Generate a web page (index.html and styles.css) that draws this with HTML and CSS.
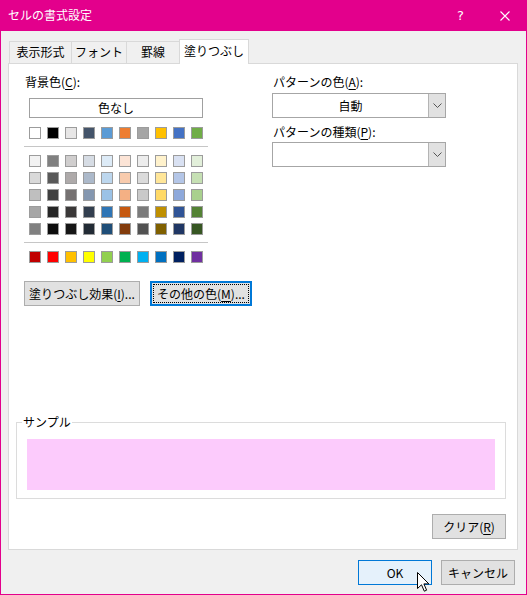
FILE: index.html
```html
<!DOCTYPE html>
<html lang="ja">
<head>
<meta charset="utf-8">
<title>セルの書式設定</title>
<link rel="stylesheet" href="styles.css">
</head>
<body>
<div class="window">
  <div class="titlebar">
    <span class="title">セルの書式設定</span>
    <span class="tb-btn help">?</span>
    <span class="tb-btn close">
      <svg width="10" height="10" viewBox="0 0 10 10"><path d="M0.5 0.5 L9.5 9.5 M9.5 0.5 L0.5 9.5" stroke="#fff" stroke-width="1.1" fill="none"/></svg>
    </span>
  </div>

  <div class="tabs">
    <div class="tab tab-num">表示形式</div>
    <div class="tab tab-font">フォント</div>
    <div class="tab tab-border">罫線</div>
    <div class="tab tab-fill active">塗りつぶし</div>
  </div>

  <div class="panel">
    <div class="top">
      <div class="left">
        <div class="label">背景色(<u>C</u>):</div>
        <div class="nocolor">色なし</div>

        <div class="swatches">
          <span style="background:#ffffff"></span><span style="background:#000000"></span><span style="background:#e7e6e6"></span><span style="background:#44546a"></span><span style="background:#5b9bd5"></span><span style="background:#ed7d31"></span><span style="background:#a5a5a5"></span><span style="background:#ffc000"></span><span style="background:#4472c4"></span><span style="background:#70ad47"></span>
        </div>
        <div class="sep"></div>
        <div class="swatches tints">
          <span style="background:#f2f2f2"></span><span style="background:#808080"></span><span style="background:#d0cece"></span><span style="background:#d6dce4"></span><span style="background:#ddebf7"></span><span style="background:#fce4d6"></span><span style="background:#ededed"></span><span style="background:#fff2cc"></span><span style="background:#d9e1f2"></span><span style="background:#e2efda"></span>
          <span style="background:#d9d9d9"></span><span style="background:#595959"></span><span style="background:#aeaaaa"></span><span style="background:#acb9ca"></span><span style="background:#bdd7ee"></span><span style="background:#f8cbad"></span><span style="background:#dbdbdb"></span><span style="background:#ffe699"></span><span style="background:#b4c6e7"></span><span style="background:#c6e0b4"></span>
          <span style="background:#bfbfbf"></span><span style="background:#404040"></span><span style="background:#757171"></span><span style="background:#8497b0"></span><span style="background:#9bc2e6"></span><span style="background:#f4b084"></span><span style="background:#c9c9c9"></span><span style="background:#ffd966"></span><span style="background:#8ea9db"></span><span style="background:#a9d08e"></span>
          <span style="background:#a6a6a6"></span><span style="background:#262626"></span><span style="background:#3a3838"></span><span style="background:#333f4f"></span><span style="background:#2f75b5"></span><span style="background:#c65911"></span><span style="background:#7b7b7b"></span><span style="background:#bf8f00"></span><span style="background:#305496"></span><span style="background:#548235"></span>
          <span style="background:#808080"></span><span style="background:#0d0d0d"></span><span style="background:#161616"></span><span style="background:#222b35"></span><span style="background:#1f4e78"></span><span style="background:#833c0c"></span><span style="background:#525252"></span><span style="background:#806000"></span><span style="background:#203764"></span><span style="background:#375623"></span>
        </div>
        <div class="sep"></div>
        <div class="swatches">
          <span style="background:#c00000"></span><span style="background:#ff0000"></span><span style="background:#ffc000"></span><span style="background:#ffff00"></span><span style="background:#92d050"></span><span style="background:#00b050"></span><span style="background:#00b0f0"></span><span style="background:#0070c0"></span><span style="background:#002060"></span><span style="background:#7030a0"></span>
        </div>

        <div class="btn-row">
          <button class="btn btn-effect">塗りつぶし効果(<u>I</u>)...</button>
          <button class="btn btn-more focused">その他の色(<u>M</u>)...</button>
        </div>
      </div>

      <div class="right">
        <div class="label">パターンの色(<u>A</u>):</div>
        <div class="combo">
          <span class="combo-value">自動</span>
          <span class="combo-arrow"><svg width="9" height="5" viewBox="0 0 9 5"><path d="M0.5 0.5 L4.5 4.5 L8.5 0.5" stroke="#555" stroke-width="1" fill="none"/></svg></span>
        </div>
        <div class="label label-2">パターンの種類(<u>P</u>):</div>
        <div class="combo">
          <span class="combo-value"></span>
          <span class="combo-arrow"><svg width="9" height="5" viewBox="0 0 9 5"><path d="M0.5 0.5 L4.5 4.5 L8.5 0.5" stroke="#555" stroke-width="1" fill="none"/></svg></span>
        </div>
      </div>
    </div>

    <fieldset class="sample">
      <legend>サンプル</legend>
      <div class="sample-fill"></div>
    </fieldset>

    <div class="clear-row">
      <button class="btn btn-clear">クリア(<u>R</u>)</button>
    </div>
  </div>

  <div class="footer">
    <button class="btn btn-ok">OK</button>
    <button class="btn btn-cancel">キャンセル</button>
  </div>

  <svg class="cursor" width="13" height="21" viewBox="0 0 13 21">
    <path d="M0.5 0.5 V16.5 L4.5 12.8 L7.3 19.2 L9.6 18.2 L6.9 11.9 H11.9 Z" fill="#fff" stroke="#000" stroke-width="1" stroke-linejoin="miter"/>
  </svg>
</div>
</body>
</html>
```

FILE: styles.css
```css
* {
  box-sizing: border-box;
}

html, body {
  margin: 0;
  padding: 0;
  background: #f0f0f0;
}

body {
  font-family: "Noto Sans CJK JP", "Noto Sans", sans-serif;
  font-size: 12px;
  line-height: 16px;
  color: #000;
}

u {
  text-decoration: underline;
  text-underline-offset: 2px;
}

.window {
  position: relative;
  width: 527px;
  height: 595px;
  border: 1px solid #e3008c;
  border-top: none;
  background: #f0f0f0;
}

/* title bar */
.titlebar {
  display: flex;
  align-items: center;
  height: 31px;
  margin: 0 -1px;
  background: #e3008c;
  color: #fff;
}

.title {
  padding-left: 8px;
  font-size: 12px;
  flex: 1;
  padding-bottom: 1px;
}

.tb-btn {
  width: 45px;
  height: 31px;
  display: flex;
  align-items: center;
  justify-content: center;
}

.help {
  font-family: "DejaVu Sans", sans-serif;
  font-size: 13px;
  padding-left: 2px;
}

.close {
  padding-left: 1px;
}

/* tabs */
.tabs {
  display: flex;
  align-items: flex-end;
  height: 22px;
  margin: 10px 0 0 8px;
}

.tab {
  height: 22px;
  border: 1px solid #d9d9d9;
  border-bottom: none;
  background: #f0f0f0;
  display: flex;
  align-items: center;
  justify-content: center;
  padding-bottom: 1px;
}

.tab + .tab {
  margin-left: -1px;
}

.tab-num { width: 63px; }
.tab-font { width: 56px; }
.tab-border { width: 54px; }
.tab-fill { width: 70px; }

.tab.active {
  position: relative;
  z-index: 1;
  height: 25px;
  margin-bottom: -1px;
  background: #fff;
  padding-bottom: 2px;
}

/* main panel */
.panel {
  height: 487px;
  margin: 0 8px 0 7px;
  background: #fff;
  border: 1px solid #d9d9d9;
  padding: 10px 11px 0 7px;
}

.top {
  display: flex;
}

.left {
  width: 256px;
  padding-left: 8px;
}

.label {
  padding-left: 1px;
  height: 16px;
}

.nocolor {
  width: 174px;
  height: 20px;
  margin: 8px 0 0 5px;
  border: 1px solid #a0a0a0;
  text-align: center;
  line-height: 18px;
}

.swatches {
  display: grid;
  grid-template-columns: repeat(10, 12px);
  column-gap: 6px;
  row-gap: 5px;
  margin-left: 5px;
  margin-top: 8px;
}

.nocolor + .swatches {
  margin-top: 9px;
}

.swatches span {
  display: block;
  width: 12px;
  height: 12px;
  border: 1px solid #9c9c9c;
}

.sep {
  width: 184px;
  height: 1px;
  margin-top: 7px;
  background: #c6c6c6;
}

.btn-row {
  display: flex;
  gap: 10px;
  margin-top: 18px;
}

.btn {
  font: inherit;
  color: #000;
  height: 25px;
  padding: 0;
  background: #e1e1e1;
  border: 1px solid #adadad;
  border-radius: 0;
  line-height: 16px;
}

.btn-effect {
  width: 116px;
}

.btn-more {
  width: 102px;
}

.btn.focused {
  border: 2px solid #0078d7;
  outline: 1px dotted #000;
  outline-offset: -4px;
}

/* pattern selectors */
.right {
  width: 174px;
}

.combo {
  display: flex;
  height: 25px;
  margin-top: 3px;
  border: 1px solid #a6a6a6;
  background: #fff;
}

.combo-value {
  flex: 1;
  text-align: center;
  line-height: 23px;
}

.combo-arrow {
  width: 17px;
  background: #e1e1e1;
  border-left: 1px solid #b4b4b4;
  display: flex;
  align-items: center;
  justify-content: center;
}

.label-2 {
  margin-top: 6px;
}

.right .label-2 + .combo {
  margin-top: 2px;
}

/* sample */
.sample {
  margin: 108px 0 0;
  padding: 0 10px 8px;
  border: 1px solid #dcdcdc;
  min-width: 0;
}

.sample legend {
  padding: 0 1px;
  margin-left: -5px;
  line-height: 16px;
}

.sample-fill {
  height: 51px;
  margin-top: 9px;
  background: #fccbfc;
}

.clear-row {
  display: flex;
  justify-content: flex-end;
  margin-top: 15px;
}

.btn-clear {
  width: 74px;
}

/* footer */
.footer {
  display: flex;
  justify-content: flex-end;
  gap: 9px;
  padding: 10px 11px 0 0;
}

.btn-ok {
  width: 74px;
  background: #e5f1fb;
  border-color: #0078d7;
}

.btn-cancel {
  width: 74px;
}

.cursor {
  position: absolute;
  left: 416px;
  top: 572px;
}
```
